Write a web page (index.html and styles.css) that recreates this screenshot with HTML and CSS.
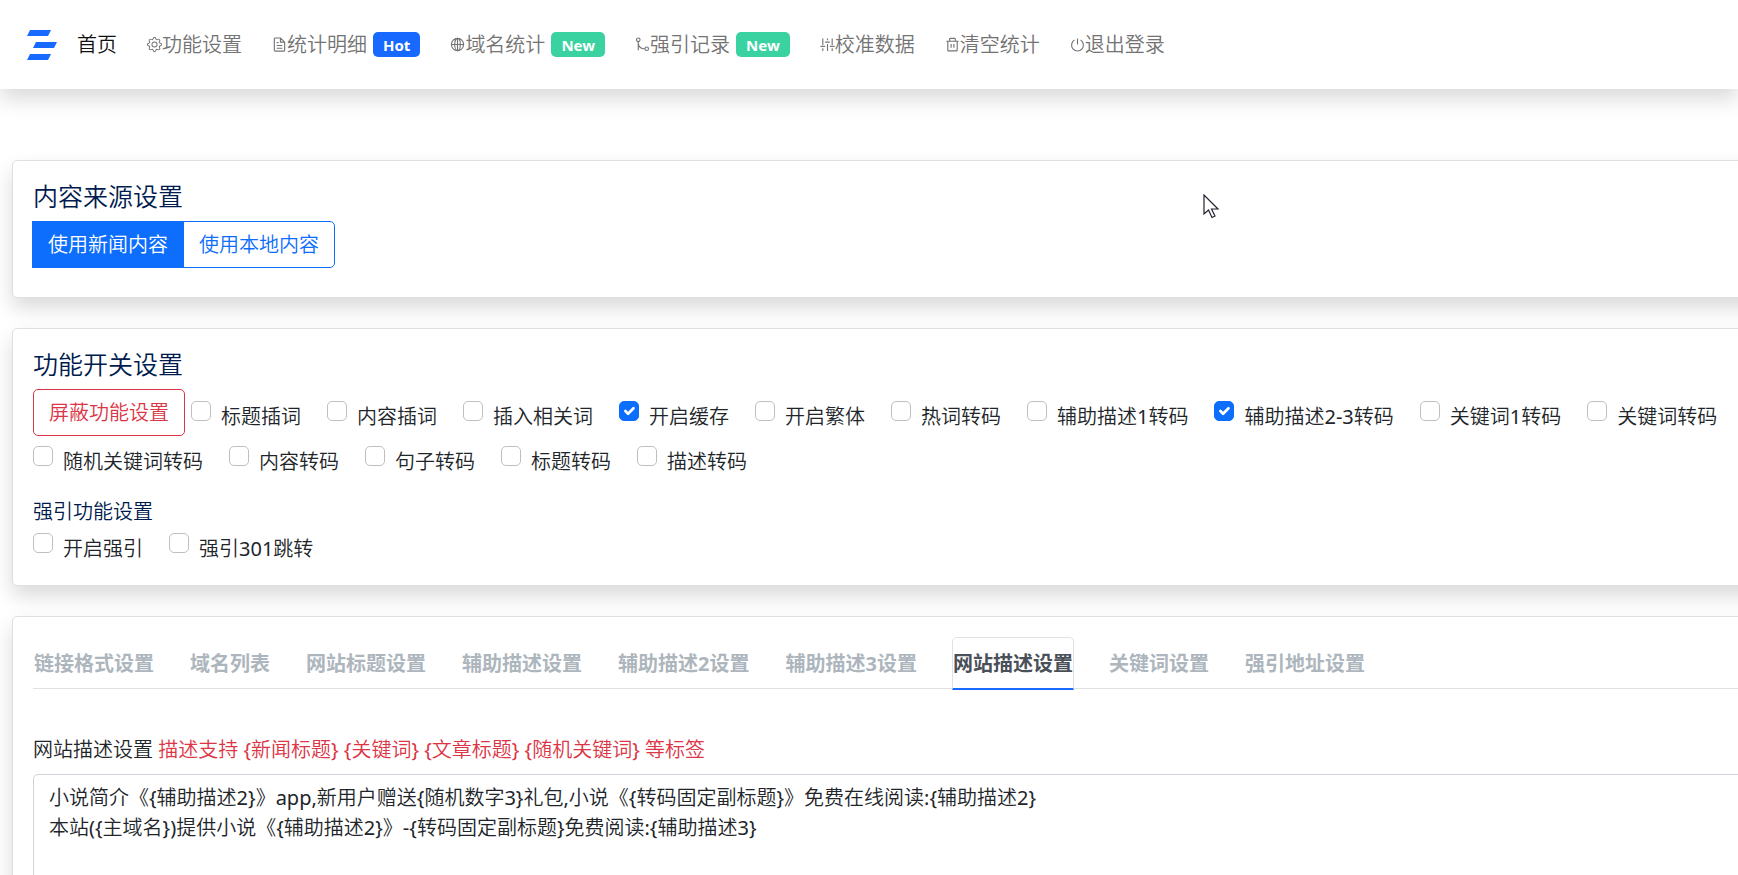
FILE: index.html
```html
<!DOCTYPE html>
<html lang="zh-CN">
<head>
<meta charset="utf-8">
<meta name="viewport" content="width=device-width, initial-scale=1">
<title>功能设置</title>
<link rel="stylesheet" href="styles.css">
</head>
<body>
<header class="navbar">
  <a class="brand" href="#" aria-label="首页">
    <svg width="30" height="30" viewBox="0 0 30 30" fill="#1769ff"><path d="M3 0h21l-3 6H0zM9 12h21l-3 6H6zM3 24h21l-3 6H0z"/></svg>
  </a>
  <nav class="menu">
    <a class="menu-link current" href="#">首页</a>
    <a class="menu-link" href="#"><svg class="icon" viewBox="0 0 16 16"><path fill="currentColor" d="M8 4.754a3.246 3.246 0 1 0 0 6.492 3.246 3.246 0 0 0 0-6.492zM5.754 8a2.246 2.246 0 1 1 4.492 0 2.246 2.246 0 0 1-4.492 0z"/><path fill="currentColor" d="M9.796 1.343c-.527-1.79-3.065-1.79-3.592 0l-.094.319a.873.873 0 0 1-1.255.52l-.292-.16c-1.64-.892-3.433.902-2.54 2.541l.159.292a.873.873 0 0 1-.52 1.255l-.319.094c-1.79.527-1.79 3.065 0 3.592l.319.094a.873.873 0 0 1 .52 1.255l-.16.292c-.892 1.64.901 3.434 2.541 2.54l.292-.159a.873.873 0 0 1 1.255.52l.094.319c.527 1.79 3.065 1.79 3.592 0l.094-.319a.873.873 0 0 1 1.255-.52l.292.16c1.64.893 3.434-.902 2.54-2.541l-.159-.292a.873.873 0 0 1 .52-1.255l.319-.094c1.79-.527 1.79-3.065 0-3.592l-.319-.094a.873.873 0 0 1-.52-1.255l.16-.292c.893-1.64-.902-3.433-2.541-2.54l-.292.159a.873.873 0 0 1-1.255-.52l-.094-.319zm-2.633.283c.246-.835 1.428-.835 1.674 0l.094.319a1.873 1.873 0 0 0 2.693 1.115l.291-.16c.764-.415 1.6.42 1.184 1.185l-.159.292a1.873 1.873 0 0 0 1.116 2.692l.318.094c.835.246.835 1.428 0 1.674l-.319.094a1.873 1.873 0 0 0-1.115 2.693l.16.291c.415.764-.42 1.6-1.185 1.184l-.291-.159a1.873 1.873 0 0 0-2.693 1.116l-.094.318c-.246.835-1.428.835-1.674 0l-.094-.319a1.873 1.873 0 0 0-2.692-1.115l-.292.16c-.764.415-1.6-.42-1.184-1.185l.159-.291A1.873 1.873 0 0 0 1.945 8.93l-.319-.094c-.835-.246-.835-1.428 0-1.674l.319-.094A1.873 1.873 0 0 0 3.06 4.377l-.16-.292c-.415-.764.42-1.6 1.185-1.184l.292.159a1.873 1.873 0 0 0 2.692-1.115l.094-.319z"/></svg>功能设置</a>
    <a class="menu-link" href="#"><svg class="icon line" viewBox="0 0 16 16"><path d="M2.500 14V2A1 1 0 0 1 3.500 1H9l4.500 4.500V14a1 1 0 0 1-1 1h-9a1 1 0 0 1-1-1zM9 1v4.500h4.500M5 6h2M5 9h6M5 12h6"/></svg>统计明细<span class="badge hot">Hot</span></a>
    <a class="menu-link" href="#"><svg class="icon line" viewBox="0 0 16 16"><circle cx="8" cy="8" r="6.500"/><ellipse cx="8" cy="8" rx="3" ry="6.500"/><path d="M1.500 8h13M8 1.500v13"/></svg>域名统计<span class="badge new">New</span></a>
    <a class="menu-link" href="#"><svg class="icon line" viewBox="0 0 16 16"><circle cx="3.500" cy="3" r="1.900"/><circle cx="12.500" cy="12.500" r="1.900"/><path d="M3.500 5V14M3.500 7c.5 3.500 3 5.500 7 5.500"/></svg>强引记录<span class="badge new">New</span></a>
    <a class="menu-link" href="#"><svg class="icon line" viewBox="0 0 16 16"><path d="M3 1.500v7M3 12v3M.5 10H5.500M8 1.500v2M8 7.500V15M5.500 5.500h5M13 1.500v7M13 12v3M10.500 10h5"/></svg>校准数据</a>
    <a class="menu-link" href="#"><svg class="icon line" viewBox="0 0 16 16"><path d="M1.500 4.500h13M3 4.500V14a.8.800 0 0 0 .8.800h8.400a.8.800 0 0 0 .8-.8V4.500M5 4.500V2.200a.7.700 0 0 1 .7-.7h4.600a.7.700 0 0 1 .7.700v2.300M6.500 7.500v4M9.500 7.500v4"/></svg>清空统计</a>
    <a class="menu-link" href="#"><svg class="icon line" viewBox="0 0 16 16"><path d="M8 1.500V8M4.700 3.300a6.300 6.300 0 1 0 6.600 0"/></svg>退出登录</a>
  </nav>
</header>

<main class="page">
  <section class="card">
    <h4 class="title">内容来源设置</h4>
    <div class="btn-group">
      <button type="button" class="btn primary filled">使用新闻内容</button>
      <button type="button" class="btn primary">使用本地内容</button>
    </div>
  </section>

  <section class="card">
    <h4 class="title">功能开关设置</h4>
    <div class="switches">
      <div class="lead">
        <button type="button" class="btn danger">屏蔽功能设置</button>
        <div class="check"><input type="checkbox" id="c1"><label for="c1">标题插词</label></div>
      </div>
      <div class="check"><input type="checkbox" id="c2"><label for="c2">内容插词</label></div>
      <div class="check"><input type="checkbox" id="c3"><label for="c3">插入相关词</label></div>
      <div class="check"><input type="checkbox" id="c4" checked><label for="c4">开启缓存</label></div>
      <div class="check"><input type="checkbox" id="c5"><label for="c5">开启繁体</label></div>
      <div class="check"><input type="checkbox" id="c6"><label for="c6">热词转码</label></div>
      <div class="check"><input type="checkbox" id="c7"><label for="c7">辅助描述1转码</label></div>
      <div class="check"><input type="checkbox" id="c8" checked><label for="c8">辅助描述2-3转码</label></div>
      <div class="check"><input type="checkbox" id="c9"><label for="c9">关键词1转码</label></div>
      <div class="check"><input type="checkbox" id="c10"><label for="c10">关键词转码</label></div>
      <div class="check"><input type="checkbox" id="c11"><label for="c11">随机关键词转码</label></div>
      <div class="check"><input type="checkbox" id="c12"><label for="c12">内容转码</label></div>
      <div class="check"><input type="checkbox" id="c13"><label for="c13">句子转码</label></div>
      <div class="check"><input type="checkbox" id="c14"><label for="c14">标题转码</label></div>
      <div class="check"><input type="checkbox" id="c15"><label for="c15">描述转码</label></div>
    </div>
    <h6 class="subtitle">强引功能设置</h6>
    <div class="switches">
      <div class="check"><input type="checkbox" id="c16"><label for="c16">开启强引</label></div>
      <div class="check"><input type="checkbox" id="c17"><label for="c17">强引301跳转</label></div>
    </div>
  </section>

  <section class="card">
    <div class="tabs" role="tablist">
      <button type="button" role="tab" class="tab">链接格式设置</button>
      <button type="button" role="tab" class="tab">域名列表</button>
      <button type="button" role="tab" class="tab">网站标题设置</button>
      <button type="button" role="tab" class="tab">辅助描述设置</button>
      <button type="button" role="tab" class="tab">辅助描述2设置</button>
      <button type="button" role="tab" class="tab">辅助描述3设置</button>
      <button type="button" role="tab" class="tab active" aria-selected="true">网站描述设置</button>
      <button type="button" role="tab" class="tab">关键词设置</button>
      <button type="button" role="tab" class="tab">强引地址设置</button>
    </div>
    <label class="field-label" for="desc">网站描述设置 <span class="hint">描述支持 {新闻标题} {关键词} {文章标题} {随机关键词} 等标签</span></label>
    <textarea class="field" id="desc" rows="10" spellcheck="false">小说简介《{辅助描述2}》app,新用户赠送{随机数字3}礼包,小说《{转码固定副标题}》免费在线阅读:{辅助描述2}
本站({主域名})提供小说《{辅助描述2}》-{转码固定副标题}免费阅读:{辅助描述3}</textarea>
  </section>
</main>

<svg class="pointer" width="17" height="25" viewBox="0 0 17 25" aria-hidden="true"><path d="M1 1v19l4.500-4 3.500 7.500 3-1.500-3.500-7H15z" fill="#fff" stroke="#223" stroke-width="1.200"/></svg>
</body>
</html>
```

FILE: styles.css
```css
* { box-sizing: border-box; }

body {
  margin: 0;
  height: 100vh;
  overflow: hidden;
  background: #fff;
  color: #212529;
  font-family: "Noto Sans", "Noto Sans CJK SC DemiLight", "Noto Sans CJK SC", sans-serif;
  font-size: 20px;
  font-weight: 400;
  line-height: 30px;
}

button, textarea { font: inherit; }

.navbar {
  display: flex;
  align-items: center;
  height: 89px;
  padding: 0 27px;
  background: #fff;
  box-shadow: 0 10px 20px rgba(0, 0, 0, .15);
}

.brand { display: flex; margin-right: 20px; }

.menu { display: flex; gap: 30px; }

.menu-link {
  display: flex;
  align-items: center;
  color: #737373;
  text-decoration: none;
  white-space: nowrap;
}

.menu-link.current { color: #111; }

.icon { width: 15px; height: 15px; flex: none; }

.icon.line { fill: none; stroke: currentColor; stroke-width: 1.2; }

.badge {
  margin-left: 6px;
  padding: 1px 10px 0;
  border-radius: 5px;
  color: #fff;
  font-family: "Noto Sans", sans-serif;
  font-size: 15px;
  font-weight: 700;
  line-height: 24px;
}

.hot { background: #1769ff; }
.new { background: #3bd2a2; }

.page { margin: 71px -64px 0 12px; }

.card {
  margin-bottom: 30px;
  padding: 20px;
  border: 1px solid #dfdfdf;
  border-radius: 5px;
  background: #fff;
  box-shadow: 0 10px 20px rgba(0, 0, 0, .15);
}

.title, .subtitle {
  margin: 0 0 10px;
  color: #001b4e;
  font-weight: 400;
}

.title { font-size: 25px; line-height: 30px; }

.subtitle { margin: 19px 0 9px; font-size: 20px; line-height: 24px; }

.btn {
  padding: 8px 15px;
  border: 1px solid;
  border-radius: 5px;
  background: #fff;
  line-height: 29px;
  white-space: nowrap;
}

.btn.primary { border-color: #0d6efd; color: #0d6efd; }
.btn.filled { background: #0d6efd; color: #fff; }
.btn.danger { border-color: #dc3545; color: #dc3545; }

.btn-group { display: flex; margin: 0 0 9px -1px; }
.btn-group .btn:first-child { border-radius: 0; }
.btn-group .btn + .btn {
  margin-left: -1px;
  border-radius: 0 5px 5px 0;
}

.switches {
  display: flex;
  flex-wrap: wrap;
  align-items: flex-end;
  gap: 10px 26px;
}

.lead { display: flex; align-items: flex-end; gap: 6px; }

.check {
  display: flex;
  align-items: flex-start;
  gap: 10px;
  padding-bottom: 4px;
  white-space: nowrap;
}

.check label { padding-top: 1px; }

.check input {
  appearance: none;
  flex: none;
  width: 20px;
  height: 20px;
  margin: 0;
  border: 1px solid #bfbfbf;
  border-radius: 5px;
  background: #fff;
}

.check input:checked {
  border-color: #0d6efd;
  background: #0d6efd url("data:image/svg+xml,%3Csvg xmlns='http://www.w3.org/2000/svg' viewBox='0 0 20 20'%3E%3Cpath fill='none' stroke='%23fff' stroke-linecap='round' stroke-linejoin='round' stroke-width='3' d='M6 10l3 3 6-6'/%3E%3C/svg%3E") center / contain no-repeat;
}

.subtitle + .switches .check { padding-bottom: 1px; }

.tabs {
  display: flex;
  gap: 34px;
  margin-bottom: 46px;
  border-bottom: 1px solid #dee2e6;
}

.tab {
  margin-bottom: -2px;
  padding: 11px 0 9px;
  border: 1px solid transparent;
  border-bottom-width: 2px;
  border-radius: 5px 5px 0 0;
  background: none;
  color: #adb5bd;
  font-family: "Noto Sans", "Noto Sans CJK SC", sans-serif;
  font-weight: 700;
  white-space: nowrap;
}

.tab.active {
  border-color: #dee2e6 #dee2e6 #1769ff;
  background: #fff;
  color: #495057;
}

.field-label { display: block; margin-bottom: 9px; }

.hint { color: #dc3545; }

.field {
  display: block;
  width: 100%;
  padding: 8px 15px;
  border: 1px solid #ced4da;
  border-radius: 5px;
  background: #fff;
  color: #212529;
  resize: none;
}

.pointer { position: absolute; left: 1203px; top: 194px; }
```
